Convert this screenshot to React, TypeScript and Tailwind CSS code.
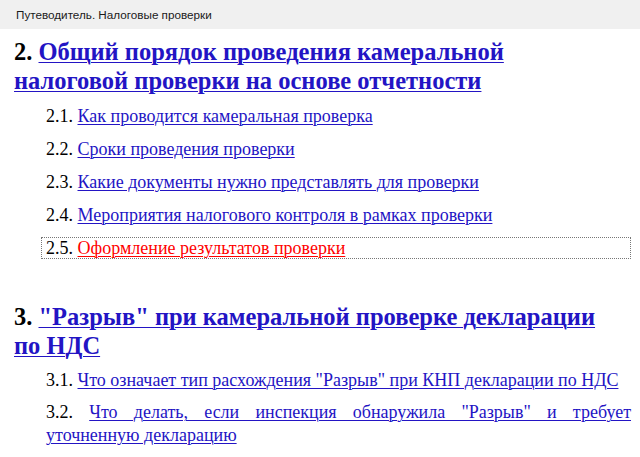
export default function App() {
  const link = "text-[#2314c4] underline decoration-1 underline-offset-2";
  return (
    <div className="w-[640px] h-[457px] overflow-hidden bg-white">
      <div className="h-[29px] bg-[#f0f0f0] flex items-center pl-[16px] text-[11.7px] text-[#1a1a1a] font-['Liberation_Sans',sans-serif]">
        Путеводитель. Налоговые проверки
      </div>
      <div className="pl-[14px] pr-[9px] font-['Liberation_Serif',serif] text-black">
        <h2 className="mt-[8px] text-[24.5px] font-bold leading-[29px]">
          2. <a className={link}>Общий порядок проведения камеральной<br />налоговой проверки на основе отчетности</a>
        </h2>
        <ul className="mt-[10px] pl-[32px] flex flex-col gap-[11px] text-[18px] leading-[22px]">
          <li>2.1. <a className={link}>Как проводится камеральная проверка</a></li>
          <li>2.2. <a className={link}>Сроки проведения проверки</a></li>
          <li>2.3. <a className={link}>Какие документы нужно представлять для проверки</a></li>
          <li>2.4. <a className={link}>Мероприятия налогового контроля в рамках проверки</a></li>
          <li className="-ml-[5px] pl-[4px] leading-[20px] border border-dotted border-[#777]">
            2.5. <a className="text-[#ff0000] underline decoration-1 underline-offset-2">Оформление результатов проверки</a>
          </li>
        </ul>
        <h2 className="mt-[43px] text-[24.5px] font-bold leading-[29px]">
          3. <a className={link}>"Разрыв" при камеральной проверке декларации<br />по НДС</a>
        </h2>
        <ul className="mt-[9px] pl-[32px] flex flex-col gap-[9px] text-[18px] leading-[23px] text-justify">
          <li>3.1. <a className={link}>Что означает тип расхождения "Разрыв" при КНП декларации по НДС</a></li>
          <li>3.2. <a className={link}>Что делать, если инспекция обнаружила "Разрыв" и требует уточненную декларацию</a></li>
        </ul>
      </div>
    </div>
  );
}
